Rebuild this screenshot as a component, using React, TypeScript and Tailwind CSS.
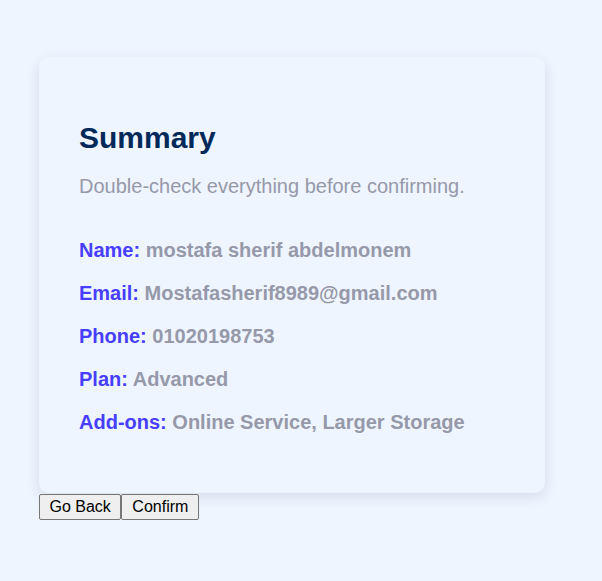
export default function App() {
  const rows: [string, string][] = [
    ["Name:", "mostafa sherif abdelmonem"],
    ["Email:", "Mostafasherif8989@gmail.com"],
    ["Phone:", "01020198753"],
    ["Plan:", "Advanced"],
    ["Add-ons:", "Online Service, Larger Storage"],
  ];
  return (
    <div
      className="min-h-[581px] w-full bg-[#eff5ff] pl-[39px] pt-[57px]"
      style={{ fontFamily: '"Liberation Sans", Arial, sans-serif' }}
    >
      <div className="w-[506px] rounded-[10px] bg-[#eff5ff] pl-[40px] pr-[40px] pt-[63px] pb-[59px] shadow-[0_4px_14px_rgba(30,40,80,0.12)]">
        <h1 className="text-[30px] leading-[35px] font-bold text-[#022959]">Summary</h1>
        <p className="mt-[20px] text-[20px] leading-[23px] text-[#9699aa]">
          Double-check everything before confirming.
        </p>
        <div className="mt-[41px] flex flex-col gap-[20px]">
          {rows.map(([k, v]) => (
            <p key={k} className="text-[20px] leading-[23px] font-bold">
              <span className="text-[#483eff]">{k}</span>{" "}
              <span className="text-[#9699aa]">{v}</span>
            </p>
          ))}
        </div>
      </div>
      <div className="mt-[1px] flex">
        <button className="h-[26px] rounded-[2px] border border-[#767676] bg-[#efefef] px-[9.5px] text-[16px] leading-[18px] text-black">
          Go Back
        </button>
        <button className="h-[26px] rounded-[2px] border border-[#767676] bg-[#efefef] px-[10px] text-[16px] leading-[18px] text-black">
          Confirm
        </button>
      </div>
    </div>
  );
}
